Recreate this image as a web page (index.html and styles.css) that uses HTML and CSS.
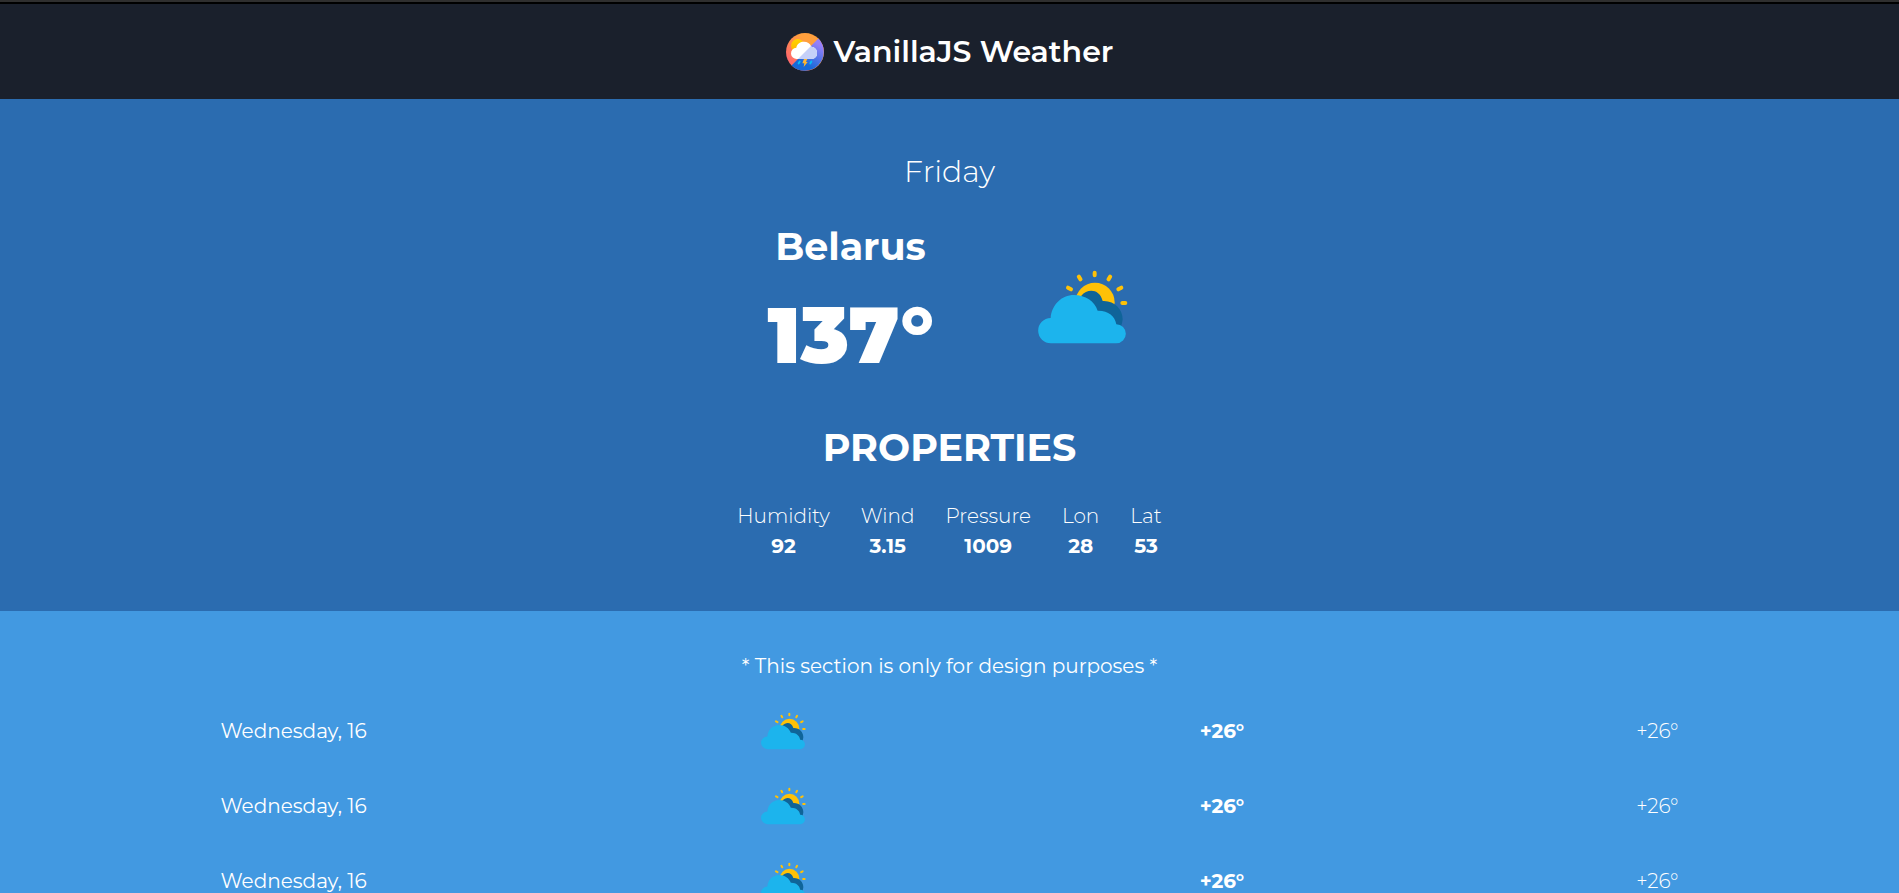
FILE: index.html
```html
<!DOCTYPE html>
<html lang="en">
<head>
<meta charset="utf-8">
<title>VanillaJS Weather</title>
<link rel="stylesheet" href="styles.css">
</head>
<body>
<svg class="sprite" aria-hidden="true">
  <symbol id="cloudy" viewBox="40 6 294 294">
    <g stroke="#ffc107" stroke-width="12" stroke-linecap="round">
      <path d="M222 53v8M174.500 65l5 8M268.500 65l-5 8M142 98l9 5M302 98l-9 5M305 144h9"/>
    </g>
    <circle cx="223" cy="142" r="59" fill="#ffc107"/>
    <path d="M182 122C200 101 236 100 246 138C281 136 306 162 306 193Q305 204 301 214L240 230L180 160Z" fill="#0f6499"/>
    <path d="M91 265A38 38 0 0 1 90 189C93 150 122 120 160 120C194 120 222 139 231 167C262 166 283 183 287 208A28 28 0 0 1 287 265Z" fill="#1cb4ed"/>
  </symbol>
</svg>

<header class="header">
  <svg class="logo" viewBox="33 39 114 114" aria-hidden="true">
    <defs>
      <linearGradient id="warm" x1="1" y1="0" x2="0" y2="1">
        <stop offset=".35" stop-color="#ff9f3d"/><stop offset=".8" stop-color="#ff6a6a"/>
      </linearGradient>
      <linearGradient id="cool" x1="1" y1="0" x2=".4" y2="1">
        <stop offset=".2" stop-color="#9580fa"/><stop offset=".85" stop-color="#1769d8"/>
      </linearGradient>
      <linearGradient id="sun" x1="0" y1="0" x2="0" y2="1">
        <stop offset="0" stop-color="#ffd500"/><stop offset="1" stop-color="#ffb000"/>
      </linearGradient>
      <clipPath id="shade"><path d="M147 39V153H33Z"/></clipPath>
    </defs>
    <circle cx="90" cy="96" r="57" fill="url(#warm)"/>
    <path d="M130.300 55.700A57 57 0 0 1 49.700 136.300Z" fill="url(#cool)"/>
    <circle cx="68" cy="77" r="20" fill="url(#sun)"/>
    <path d="M66 117A17 17 0 0 1 64 83C68 61 102 59 109 80A19 19 0 0 1 113 117Z" fill="#fff"/>
    <path clip-path="url(#shade)" d="M66 117A17 17 0 0 1 64 83C68 61 102 59 109 80A19 19 0 0 1 113 117Z" fill="#c5d0f8"/>
    <path d="M87 117h10l-4 9h5l-12 15 2-11h-6z" fill="#ffb52e"/>
    <path d="M74 125l-3 5M109 125l-3 5" stroke="#08bdf5" stroke-width="6" stroke-linecap="round"/>
  </svg>
  <h1 class="brand">VanillaJS Weather</h1>
</header>

<main>
  <section class="current">
    <p class="day">Friday</p>
    <div class="summary">
      <div class="reading">
        <h2 class="heading">Belarus</h2>
        <p class="degrees">137°</p>
      </div>
      <svg class="icon-large" role="img" aria-label="Partly cloudy"><use href="#cloudy"/></svg>
    </div>
    <h2 class="heading properties-title">PROPERTIES</h2>
    <dl class="properties">
      <div><dt>Humidity</dt><dd>92</dd></div>
      <div><dt>Wind</dt><dd>3.15</dd></div>
      <div><dt>Pressure</dt><dd>1009</dd></div>
      <div><dt>Lon</dt><dd>28</dd></div>
      <div><dt>Lat</dt><dd>53</dd></div>
    </dl>
  </section>

  <section class="forecast">
    <p class="note">* This section is only for design purposes *</p>
    <ul class="days">
      <li><span>Wednesday, 16</span><svg class="icon-small" role="img" aria-label="Partly cloudy"><use href="#cloudy"/></svg><strong>+26°</strong><span class="low">+26°</span></li>
      <li><span>Wednesday, 16</span><svg class="icon-small" role="img" aria-label="Partly cloudy"><use href="#cloudy"/></svg><strong>+26°</strong><span class="low">+26°</span></li>
      <li><span>Wednesday, 16</span><svg class="icon-small" role="img" aria-label="Partly cloudy"><use href="#cloudy"/></svg><strong>+26°</strong><span class="low">+26°</span></li>
    </ul>
  </section>
</main>
</body>
</html>
```
FILE: styles.css
```css
* { box-sizing: border-box; margin: 0; padding: 0; }

body {
  background: #4299e1;
  color: #fff;
  font-family: Montserrat, Inter, "Open Sans", sans-serif;
  font-size: 20px;
  line-height: 30px;
  border-top: 2px solid #2f2f2f;
}

.sprite { position: absolute; width: 0; height: 0; }

.header {
  display: flex;
  align-items: center;
  justify-content: center;
  gap: 10px;
  padding: 28px 20px;
  background: #1a202c;
  border-top: 2px solid #000;
}
.logo { width: 38px; height: 38px; }
.brand { font-size: 30px; font-weight: 600; line-height: 39px; }

.current {
  display: flex;
  flex-direction: column;
  align-items: center;
  padding: 53px 20px 50px;
  background: #2b6cb0;
}
.day { font-size: 30px; font-weight: 300; line-height: 40px; }
.summary {
  display: flex;
  align-items: center;
  gap: 100px;
  margin-top: 35px;
}
.reading { text-align: center; }
.heading { font-size: 38px; font-weight: 700; line-height: 40px; }
.degrees { margin-top: 18px; font-size: 79px; font-weight: 900; line-height: 100px; }
.icon-large { width: 98px; height: 98px; }
.properties-title { margin-top: 43px; }
.properties {
  display: flex;
  gap: 31px;
  margin-top: 33px;
  text-align: center;
}
.properties dt { font-weight: 300; }
.properties dd { font-weight: 700; }

.forecast { padding: 40px 20px; background: #4299e1; }
.note { text-align: center; }
.days { max-width: 1458px; margin: 12px auto 0; list-style: none; }
.days li {
  display: flex;
  align-items: center;
  justify-content: space-between;
  height: 75px;
}
.icon-small { width: 49px; height: 49px; }
.days strong { font-weight: 700; }
.low { font-weight: 300; }
```
